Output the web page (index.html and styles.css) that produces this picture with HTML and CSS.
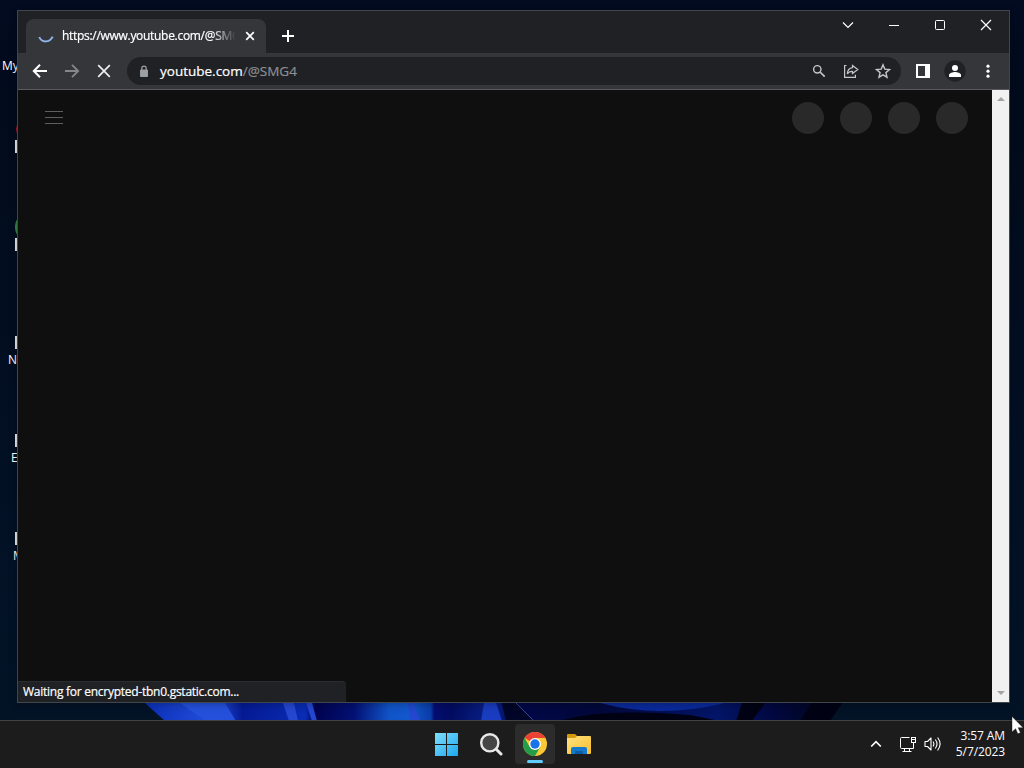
FILE: index.html
```html
<!DOCTYPE html>
<html lang="en">
<head>
  <meta charset="UTF-8">
  <title>youtube.com/@SMG4</title>
  <link rel="stylesheet" href="styles.css">
</head>
<body>
  <div class="desktop">
    <svg class="wallpaper" width="1024" height="18" viewBox="0 0 1024 18">
      <defs>
        <linearGradient id="bloom">
          <stop offset="0" stop-color="#0b2fb8"/>
          <stop offset=".1" stop-color="#2350dc"/>
          <stop offset=".14" stop-color="#051a94"/>
          <stop offset=".23" stop-color="#0a2cb4"/>
          <stop offset=".245" stop-color="#01034f"/>
          <stop offset=".3" stop-color="#031173"/>
          <stop offset=".35" stop-color="#1054c8"/>
          <stop offset=".38" stop-color="#1258cc"/>
          <stop offset=".41" stop-color="#0a3ca8"/>
          <stop offset=".415" stop-color="#030d70"/>
          <stop offset=".44" stop-color="#020c60"/>
          <stop offset=".5" stop-color="#0a238d"/>
          <stop offset=".53" stop-color="#020848"/>
          <stop offset=".65" stop-color="#02083a"/>
          <stop offset=".82" stop-color="#031568"/>
          <stop offset=".9" stop-color="#020840"/>
          <stop offset="1" stop-color="#010514"/>
        </linearGradient>
      </defs>
      <path fill="url(#bloom)" d="M145 0H842L830 18H165Z"/>
      <path fill="#2450dc" d="M180 0H225L236 18H206Z"/>
      <path fill="#2547d0" d="M283 0H294L298 18H289ZM306 0H312L317 18H312ZM408 0H413L420 18H411Z"/>
      <path fill="#1a3cc0" d="M484 0H496L502 18H481Z"/>
      <path fill="#010527" d="M502 0H516L534 18H506Z"/>
      <path fill="#000214" d="M560 18Q600 5 690 12L720 18ZM742 0H765L752 18H736ZM812 0H842L830 18H800Z"/>
      <path fill="none" stroke="#314a9c" d="M516 0L534 18"/>
      <path fill="#0a2a9c" d="M600 0H725Q660 16 600 0Z"/>
    </svg>

    <span class="desktop-label my">My</span>
    <span class="desktop-label net">N</span>
    <span class="desktop-label ed">Es</span>
    <span class="desktop-label mi">M</span>
    <i class="app red"></i>
    <i class="app green"></i>
    <i class="shortcut s1"></i>
    <i class="shortcut s2"></i>
    <i class="shortcut s3"></i>
    <i class="shortcut s4"></i>
    <i class="shortcut s5"></i>

    <div class="window">
      <div class="titlebar">
        <div class="tab">
          <svg class="spinner" width="16" height="16" viewBox="0 0 16 16"><path d="M1.300 9C3.500 14.800 11.500 15 14.700 8.600" fill="none" stroke="#8fb4ea" stroke-width="2"/></svg>
          <span class="tab-title">https://www.youtube.com/@SMG</span>
          <svg class="tab-close" width="10" height="10" viewBox="0 0 10 10"><path d="M1.200 1.200l7.600 7.600m0-7.600L1.200 8.800" stroke="#fff" stroke-width="1.700"/></svg>
        </div>
        <svg class="new-tab" width="12" height="12" viewBox="0 0 12 12"><path d="M6 0v12M0 6h12" stroke="#fff" stroke-width="2"/></svg>
        <div class="controls">
          <svg width="46" height="28" viewBox="0 0 46 28"><path d="M18 11.500l5 5 5-5" fill="none" stroke="#fff" stroke-width="1.200"/></svg>
          <svg width="46" height="28" viewBox="0 0 46 28"><path d="M18 14.500h10" stroke="#fff"/></svg>
          <svg width="46" height="28" viewBox="0 0 46 28"><rect x="18.500" y="9.500" width="9" height="9" rx="1" fill="none" stroke="#fff"/></svg>
          <svg width="46" height="28" viewBox="0 0 46 28"><path d="M18 9l10 10m0-10L18 19" stroke="#fff" stroke-width="1.200"/></svg>
        </div>
      </div>

      <div class="toolbar">
        <div class="nav">
          <svg width="16" height="16" viewBox="0 0 16 16"><path d="M15 8H2.500M8 1.800L1.800 8 8 14.200" fill="none" stroke="#fff" stroke-width="2"/></svg>
          <svg width="16" height="16" viewBox="0 0 16 16"><path d="M1 8h12.500M8 1.800L14.200 8 8 14.200" fill="none" stroke="#85878a" stroke-width="1.800"/></svg>
          <svg width="16" height="16" viewBox="0 0 16 16"><path d="M2.200 2.200l11.600 11.600m0-11.600L2.200 13.800" stroke="#eee" stroke-width="1.700"/></svg>
        </div>
        <div class="omnibox">
          <svg class="lock" width="10" height="13" viewBox="0 0 10 13"><rect x="1" y="4.500" width="8" height="7.500" rx="1" fill="#9aa0a6"/><path d="M2.800 5V3.300a2.200 2.200 0 0 1 4.400 0V5" fill="none" stroke="#9aa0a6" stroke-width="1.200"/></svg>
          <span class="url">youtube.com<span class="path">/@SMG4</span></span>
          <div class="actions">
            <svg width="16" height="16" viewBox="0 0 16 16"><circle cx="6.300" cy="6.300" r="3.700" fill="none" stroke="#c4c7ca" stroke-width="1.400"/><path d="M9 9l4.700 4.700" stroke="#c4c7ca" stroke-width="1.700"/></svg>
            <svg width="16" height="16" viewBox="0 0 16 16"><g fill="none" stroke="#c4c7ca" stroke-width="1.200"><path d="M3.500 2.500H1.600V14.400H12.400V11.800"/><path d="M9.500 2.500L14.800 6.500 9.500 10.500V8.300C7 8.200 5.500 8.900 4.300 10.900 4.500 7.700 6 5.100 9.500 4.700Z"/></g></svg>
            <svg width="16" height="16" viewBox="0 0 16 16"><path d="M8 1.800l1.800 4.300 4.700.4-3.600 3.100 1.100 4.600L8 11.800l-4 2.400 1.100-4.600L1.500 6.500l4.700-.4Z" fill="none" stroke="#c4c7ca" stroke-width="1.400"/></svg>
          </div>
        </div>
        <div class="extras">
          <svg width="14" height="14" viewBox="0 0 14 14"><path d="M1 1h12v12H1z" fill="none" stroke="#fff" stroke-width="2"/><path d="M9 1h4v12H9z" fill="#fff"/></svg>
          <svg width="22" height="22" viewBox="0 0 22 22"><circle cx="11" cy="11" r="10.700" fill="#202124"/><circle cx="11" cy="8" r="3" fill="#fff"/><path d="M5 17v-2c0-2 4-3 6-3s6 1 6 3v2z" fill="#fff"/></svg>
          <svg width="4" height="14" viewBox="0 0 4 14"><g fill="#fff"><circle cx="2" cy="2.200" r="1.600"/><circle cx="2" cy="7.200" r="1.600"/><circle cx="2" cy="12.200" r="1.600"/></g></svg>
        </div>
      </div>

      <div class="viewport">
        <div class="page">
          <div class="masthead">
            <svg width="18" height="14" viewBox="0 0 18 14"><path d="M0 .500h18M0 6.500h18M0 12.500h18" stroke="#5e5e5e"/></svg>
            <div class="skeletons"><i></i><i></i><i></i><i></i></div>
          </div>
          <div class="status"><span>Waiting for encrypted-tbn0.gstatic.com...</span></div>
        </div>
        <div class="scrollbar">
          <svg width="8" height="5" viewBox="0 0 8 5"><path d="M0 5l4-4 4 4z" fill="#a3a3a3"/></svg>
          <svg width="8" height="5" viewBox="0 0 8 5"><path d="M0 0l4 4 4-4z" fill="#a3a3a3"/></svg>
        </div>
      </div>
    </div>

    <div class="taskbar">
      <div class="pinned">
        <div class="task">
          <svg width="24" height="24" viewBox="0 0 24 24">
            <defs><linearGradient id="win" x1="0" y1="0" x2="24" y2="24" gradientUnits="userSpaceOnUse"><stop stop-color="#82e0fc"/><stop offset="1" stop-color="#1aa5ee"/></linearGradient></defs>
            <path fill="url(#win)" d="M0 1h11v11H0zM12 1h11v11H12zM0 13h11v11H0zM12 13h11v11H12z"/>
          </svg>
        </div>
        <div class="task">
          <svg width="24" height="24" viewBox="0 0 24 24"><path d="M17 17l5 5" stroke="#e8e8e8" stroke-width="3" stroke-linecap="round"/><circle cx="10.800" cy="10.800" r="8.600" fill="#454545" stroke="#e8e8e8" stroke-width="2.400"/></svg>
        </div>
        <div class="task active">
          <svg width="24" height="24" viewBox="0 0 24 24">
            <circle cx="12" cy="12" r="12" fill="#fcc934"/>
            <path fill="#ea4335" d="M12 12L1.600 6A12 12 0 0 1 22.400 6H12Z"/>
            <path fill="#249d49" d="M1.600 6A12 12 0 0 0 12 24L17.200 15 12 12 6.800 15Z"/>
            <circle cx="12" cy="12" r="6" fill="#fff"/>
            <circle cx="12" cy="12" r="4.700" fill="#1a73e8"/>
          </svg>
          <i class="running"></i>
        </div>
        <div class="task">
          <svg width="24" height="24" viewBox="0 0 24 24">
            <defs><linearGradient id="folder" x1="0" y1="0" x2="1" y2="1"><stop stop-color="#ffe282"/><stop offset="1" stop-color="#f9be2c"/></linearGradient></defs>
            <path fill="#d49a0c" d="M0 3a1 1 0 0 1 1-1h7l2 2v4H0z"/>
            <path fill="url(#folder)" d="M0 6h8l2-2h13a1 1 0 0 1 1 1v16a1 1 0 0 1-1 1H1a1 1 0 0 1-1-1z"/>
            <path fill="#1479ca" d="M4 22v-5a2 2 0 0 1 2-2h12a2 2 0 0 1 2 2v5z"/>
            <path fill="#0c5da8" d="M8 19h8v3H8z"/>
          </svg>
        </div>
      </div>
      <div class="tray">
        <svg class="chevron" width="12" height="8" viewBox="0 0 12 8"><path d="M1.200 6.500L6 1.700l4.800 4.800" fill="none" stroke="#fff" stroke-width="1.700"/></svg>
        <svg class="network" width="17" height="17" viewBox="0 0 17 17"><g fill="none" stroke="#fff"><path d="M10.500 1.500H2.500a1 1 0 0 0-1 1v9a1 1 0 0 0 1 1h12V7M5.500 12.500v3M10.500 12.500v3M3.500 15.500h9"/><rect x="12.500" y="1.500" width="4" height="5"/><path d="M12.500 3.500h4"/></g></svg>
        <svg class="volume" width="17" height="16" viewBox="0 0 17 16"><g fill="none" stroke="#fff" stroke-width="1.100"><path d="M1 5.500h2.500L7 2v12L3.500 10.500H1z" stroke-linejoin="round"/><path d="M9 5.500q1.800 2.500 0 5M11.300 3.500q3.400 4.500 0 9M13.600 1.500q5 6.500 0 13"/></g></svg>
        <div class="clock"><span>3:57 AM</span><span>5/7/2023</span></div>
      </div>
    </div>

    <svg class="cursor" width="14" height="20" viewBox="0 0 14 20"><path d="M1 .500v15.500l3.600-3.300 2.200 5.100 2.600-1.100-2.200-5h4.900z" fill="#fff" stroke="#111" stroke-width=".4"/></svg>
  </div>
</body>
</html>
```

FILE: styles.css
```css
body {
  margin: 0;
  background: #020b1c;
  font-family: "Open Sans", "Noto Sans", sans-serif;
  font-size: 12px;
  color: #fff;
}

svg {
  display: block;
  flex: none;
}

.desktop {
  position: relative;
  display: flex;
  flex-direction: column;
  justify-content: flex-end;
  width: 1024px;
  height: 768px;
  overflow: hidden;
  background: linear-gradient(#020b20, #020b1b 15%, #021024 60%, #031427);
}

.wallpaper {
  position: absolute;
  left: 0;
  top: 703px;
}

/* desktop icons, mostly covered by the browser */
.desktop-label {
  position: absolute;
  line-height: 16px;
}

.my { left: 2px; top: 58px; }
.net { left: 8px; top: 352px; }
.ed { left: 11px; top: 450px; }
.mi { left: 13px; top: 548px; }

.shortcut {
  position: absolute;
  left: 15px;
  width: 12px;
  height: 13px;
  background: #e8e8ec;
}

.s1 { top: 140px; }
.s2 { top: 238px; }
.s3 { top: 336px; }
.s4 { top: 434px; }
.s5 { top: 532px; }

.app {
  position: absolute;
  border-radius: 50%;
}

.red {
  left: 16px;
  top: 119px;
  width: 20px;
  height: 20px;
  background: #a51d2d;
}

.green {
  left: 15px;
  top: 211px;
  width: 32px;
  height: 32px;
  background: #398548;
}

.window {
  position: absolute;
  left: 17px;
  top: 10px;
  display: flex;
  flex-direction: column;
  box-sizing: border-box;
  width: 993px;
  height: 693px;
  border: 1px solid #41464d;
  background: #0f0f0f;
  box-shadow: 0 2px 8px rgba(0, 0, 0, 0.25);
}

.titlebar {
  display: flex;
  height: 42px;
  padding-left: 8px;
  background: #202124;
}

.tab {
  display: flex;
  align-items: center;
  box-sizing: border-box;
  width: 240px;
  height: 34px;
  margin-top: 8px;
  padding: 0 11px 0 12px;
  border-radius: 8px 8px 0 0;
  background: #35363a;
}

.tab-title {
  width: 174px;
  margin: 0 9px 2px 8px;
  overflow: hidden;
  white-space: nowrap;
  letter-spacing: -0.3px;
  -webkit-text-stroke: 0.2px;
  -webkit-mask-image: linear-gradient(90deg, #000 86%, transparent);
  mask-image: linear-gradient(90deg, #000 86%, transparent);
}

.new-tab {
  margin: 19px 0 0 16px;
}

.controls {
  display: flex;
  margin-left: auto;
}

.toolbar {
  display: flex;
  align-items: center;
  height: 36px;
  border-bottom: 1px solid #5a5b5e;
  background: #35363a;
}

.nav {
  display: flex;
  gap: 16px;
  padding: 0 15px 0 14px;
}

.omnibox {
  display: flex;
  align-items: center;
  box-sizing: border-box;
  width: 774px;
  height: 28px;
  padding: 0 10px 0 12px;
  border-radius: 14px;
  background: #202124;
}

.url {
  margin-left: 11px;
  font-size: 13.500px;
  -webkit-text-stroke: 0.2px;
}

.path {
  color: #8b8f94;
}

.actions {
  display: flex;
  gap: 16px;
  margin-left: auto;
}

.extras {
  display: flex;
  align-items: center;
  margin-left: 15px;
}

.extras svg:nth-child(2) {
  margin: 0 20px 0 14px;
}

.viewport {
  display: flex;
  flex: 1;
}

.page {
  display: flex;
  flex: 1;
  flex-direction: column;
  justify-content: space-between;
}

.masthead {
  display: flex;
  align-items: center;
  justify-content: space-between;
  height: 56px;
  padding: 0 24px 0 27px;
}

.skeletons {
  display: flex;
  gap: 16px;
}

.skeletons i {
  width: 32px;
  height: 32px;
  border-radius: 50%;
  background: #292929;
}

.status {
  box-sizing: border-box;
  width: 328px;
  height: 21px;
  padding-left: 5px;
  border-top: 1px solid #2b2c2f;
  border-radius: 0 4px 0 0;
  background: #202124;
  line-height: 19px;
  letter-spacing: -0.26px;
  -webkit-text-stroke: 0.2px;
}

.scrollbar {
  display: flex;
  flex-direction: column;
  align-items: center;
  justify-content: space-between;
  box-sizing: border-box;
  width: 17px;
  padding: 6px 0;
  background: #f1f1f1;
}

.taskbar {
  position: relative;
  display: flex;
  justify-content: center;
  box-sizing: border-box;
  height: 48px;
  padding-bottom: 1px;
  border-top: 1px solid #404346;
  background: #1c1c1c;
}

.pinned {
  display: flex;
  align-items: center;
  gap: 4px;
  padding-left: 2px;
}

.task {
  position: relative;
  display: flex;
  align-items: center;
  justify-content: center;
  width: 40px;
  height: 40px;
  border-radius: 4px;
}

.active {
  background: #2c2c2c;
}

.running {
  position: absolute;
  left: 12px;
  bottom: 1px;
  width: 16px;
  height: 3px;
  border-radius: 2px;
  background: #60cdff;
}

.tray {
  position: absolute;
  right: 19px;
  top: 0;
  display: flex;
  align-items: center;
  height: 46px;
}

.network {
  margin-left: 17px;
}

.volume {
  margin-left: 8px;
}

.clock {
  display: flex;
  flex-direction: column;
  width: 64px;
  text-align: right;
  line-height: 16px;
  letter-spacing: -0.1px;
}

.cursor {
  position: absolute;
  left: 1011px;
  top: 716px;
}
```
